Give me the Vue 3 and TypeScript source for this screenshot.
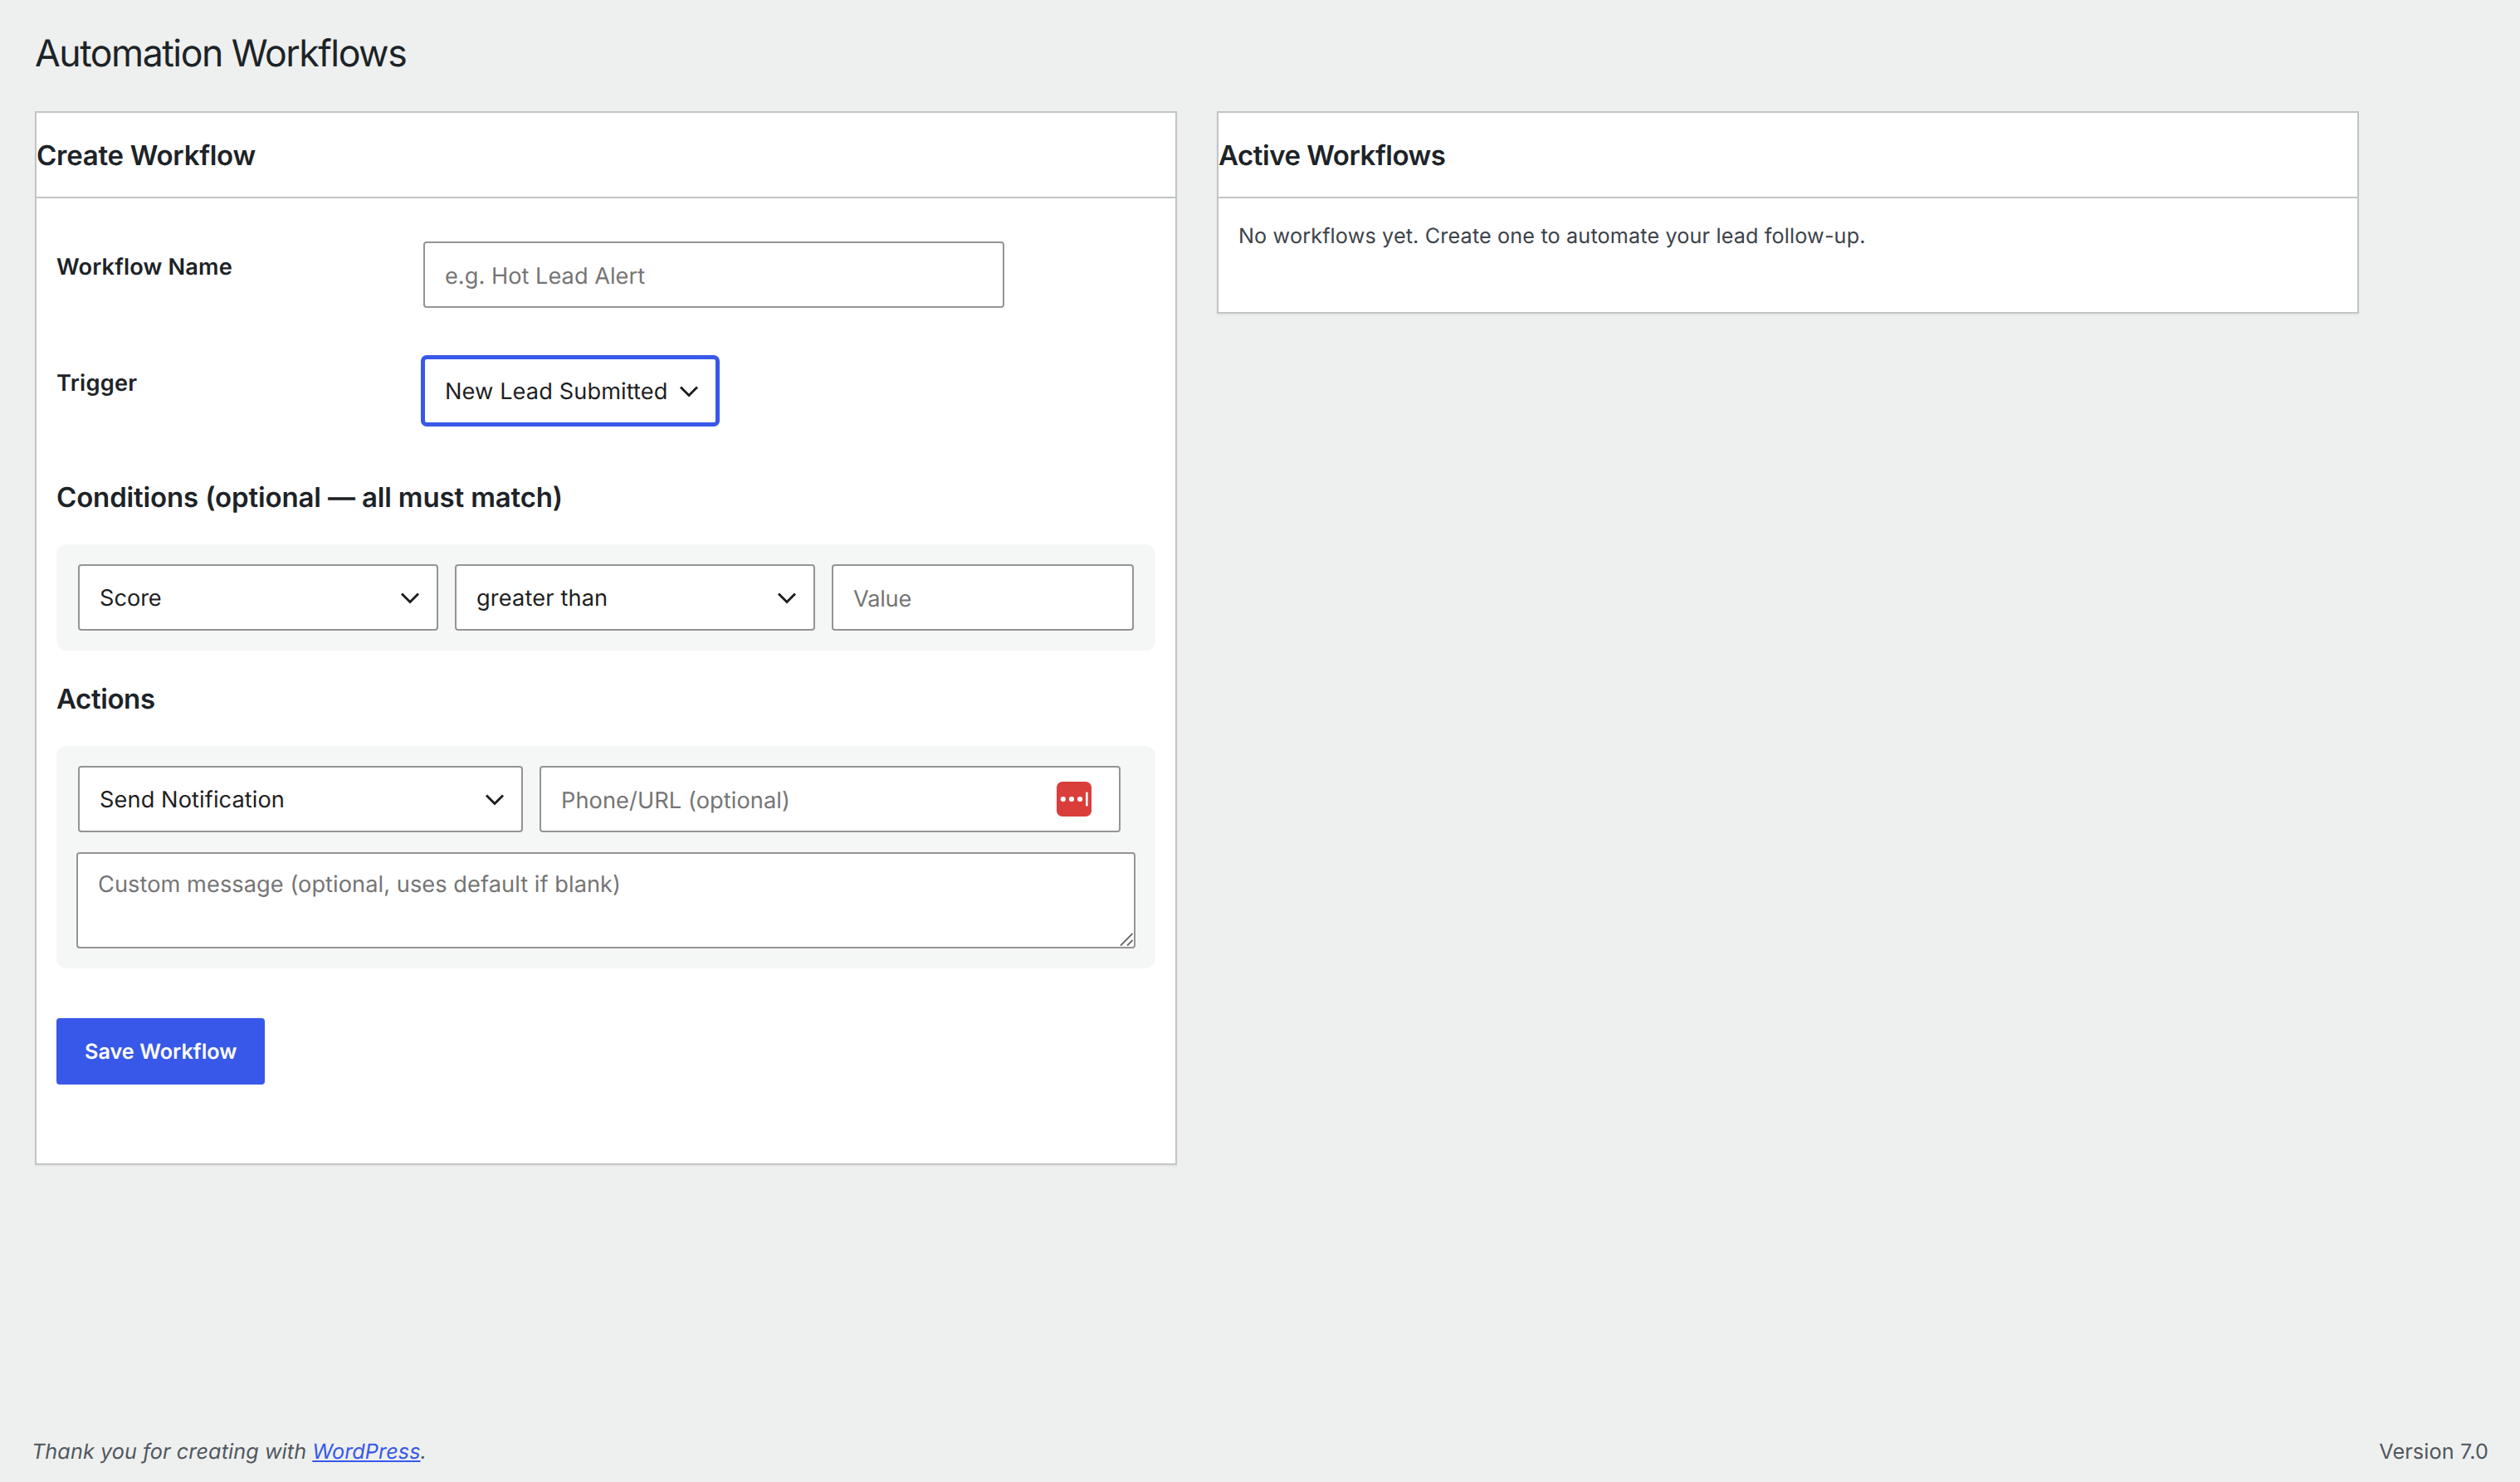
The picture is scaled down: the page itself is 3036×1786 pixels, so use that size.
<script setup lang="ts">
import { ref } from 'vue'

const workflowName = ref('')
const trigger = ref('new_lead')
const field = ref('score')
const operator = ref('gt')
const value = ref('')
const action = ref('notify')
const target = ref('')
const message = ref('')
</script>

<template>
  <div class="screen">
    <main class="wrap">
      <h1>Automation Workflows</h1>

      <div class="columns">
        <section class="card">
          <header class="card-head"><h2 class="t-create">Create Workflow</h2></header>
          <form class="card-body form" @submit.prevent>
            <div class="field">
              <label class="t-name" for="wf-name">Workflow Name</label>
              <input id="wf-name" v-model="workflowName" class="control wide t-eg" type="text" placeholder="e.g. Hot Lead Alert" />
            </div>
            <div class="field second">
              <label class="t-trigger" for="wf-trigger">Trigger</label>
              <div class="select trigger">
                <select id="wf-trigger" v-model="trigger" class="control focused t-lead">
                  <option value="new_lead">New Lead Submitted</option>
                </select>
                <svg class="chevron" viewBox="0 0 32 32"><path d="M6 10.5 16 20.5 26 10.5" /></svg>
              </div>
            </div>

            <h3 class="t-cond">Conditions (optional — all must match)</h3>
            <div class="group row">
              <div class="select cond">
                <select v-model="field" class="control t-score">
                  <option value="score">Score</option>
                </select>
                <svg class="chevron" viewBox="0 0 32 32"><path d="M6 10.5 16 20.5 26 10.5" /></svg>
              </div>
              <div class="select cond">
                <select v-model="operator" class="control t-gt">
                  <option value="gt">greater than</option>
                </select>
                <svg class="chevron" viewBox="0 0 32 32"><path d="M6 10.5 16 20.5 26 10.5" /></svg>
              </div>
              <input v-model="value" class="control value t-value" type="text" placeholder="Value" />
            </div>

            <h3 class="actions-title t-actions">Actions</h3>
            <div class="group">
              <div class="row">
                <div class="select action">
                  <select v-model="action" class="control t-send">
                    <option value="notify">Send Notification</option>
                  </select>
                  <svg class="chevron" viewBox="0 0 32 32"><path d="M6 10.5 16 20.5 26 10.5" /></svg>
                </div>
                <div class="target">
                  <input v-model="target" class="control wide t-phone" type="text" placeholder="Phone/URL (optional)" />
                  <svg class="vault" viewBox="0 0 42 42">
                    <rect width="42" height="42" rx="7" fill="#da3e3b" />
                    <circle cx="7.8" cy="21" r="3.1" />
                    <circle cx="18" cy="21" r="3.1" />
                    <circle cx="28.1" cy="21" r="3.1" />
                    <rect x="35.1" y="12.6" width="2.5" height="16.8" rx="1" />
                  </svg>
                </div>
              </div>
              <div class="message">
                <textarea v-model="message" class="control t-custom" placeholder="Custom message (optional, uses default if blank)"></textarea>
                <svg class="grip" viewBox="0 0 18 18"><path d="M2 16.5 16.5 2M10 16.5 16.5 10" /></svg>
              </div>
            </div>

            <button class="save" type="submit">Save Workflow</button>
          </form>
        </section>

        <section class="card">
          <header class="card-head"><h2 class="t-active">Active Workflows</h2></header>
          <div class="card-body empty">
            <p>No workflows yet. Create one to automate your lead follow-up.</p>
          </div>
        </section>
      </div>
    </main>

    <footer class="footer">
      <span class="thanks">Thank you for creating with <a href="#">WordPress</a>.</span>
      <span class="version">Version 7.0</span>
    </footer>
  </div>
</template>

<style>
body {
  background: #eef0ef;
}
</style>

<style scoped>
.screen,
.screen * {
  box-sizing: border-box;
}
.screen {
  display: flex;
  flex-direction: column;
  justify-content: space-between;
  width: 3036px;
  height: 1786px;
  overflow: hidden;
  background: #eef0ef;
  color: #1d2327;
  font-family: Inter, "Liberation Sans", sans-serif;
  text-rendering: geometricPrecision;
}
h1, h2, h3, p {
  margin: 0;
  white-space: nowrap;
}
.wrap {
  padding: 34px 0 0 42px;
}
h1 {
  margin-bottom: 40px;
  font-size: 44.6px;
  font-weight: 400;
  line-height: 60px;
  letter-spacing: -1.48px;
}
.columns {
  display: flex;
  align-items: flex-start;
  gap: 48px;
}
.card {
  width: 1376px;
  background: #fff;
  border: 2px solid #c3c4c7;
  box-shadow: 0 2px 2px rgba(0, 0, 0, 0.04);
}
.card-head {
  height: 103px;
  border-bottom: 2px solid #c3c4c7;
}
h2, h3 {
  font-size: 33px;
  font-weight: 620;
}
h2 {
  line-height: 102px;
}
.card-body {
  padding: 0 24px;
}
.form {
  padding-top: 52px;
  padding-bottom: 95px;
}
.field {
  display: flex;
}
.field.second {
  margin-top: 60px;
}
.field label {
  width: 442px;
  padding-top: 11px;
  font-size: 27.2px;
  font-weight: 620;
  line-height: 40px;
}
.control {
  display: block;
  width: 100%;
  height: 80px;
  margin: 0;
  padding: 0 24px;
  appearance: none;
  background: #fff;
  border: 2px solid #949494;
  border-radius: 4px;
  outline: none;
  color: #1e1e1e;
  font-family: inherit;
  font-size: 27.2px;
  line-height: 40px;
  text-rendering: geometricPrecision;
}
input.control,
select.control {
  padding-top: 2px;
}
.control::placeholder {
  color: #757575;
  opacity: 1;
}
.control.wide {
  width: 700px;
}
.control.value {
  width: 364px;
}
.control.focused {
  border-color: #3858e9;
  box-shadow: 0 0 0 3px #3858e9;
}
.select {
  position: relative;
}
.trigger {
  width: 354px;
}
.cond {
  width: 434px;
}
.action {
  width: 536px;
}
.chevron {
  position: absolute;
  top: 25px;
  right: 18px;
  width: 32px;
  height: 32px;
  fill: none;
  stroke: #1e1e1e;
  stroke-width: 3;
  pointer-events: none;
}
h3 {
  margin: 66px 0 35px;
  line-height: 44px;
}
h3.actions-title {
  margin-top: 36px;
}
.group {
  padding: 24px;
  background: #f5f7f6;
  border-radius: 12px;
}
.row {
  display: flex;
  gap: 20px;
}
.group .row {
  padding-left: 2px;
}
.group.row {
  padding-left: 26px;
}
.target {
  position: relative;
}
.vault {
  position: absolute;
  top: 19px;
  right: 35px;
  width: 42px;
  height: 42px;
  fill: #fff;
}
.message {
  position: relative;
  margin-top: 24px;
}
textarea.control {
  height: 116px;
  padding-top: 17px;
  resize: none;
  overflow: hidden;
}
.grip {
  position: absolute;
  right: 2px;
  bottom: 2px;
  width: 18px;
  height: 18px;
  fill: none;
  stroke: #6a6a6a;
  stroke-width: 1.8;
}
.save {
  display: block;
  width: 251px;
  height: 80px;
  margin-top: 60px;
  padding: 1px 0 0 34px;
  background: #3858e9;
  border: 0;
  border-radius: 4px;
  color: #fff;
  font-family: inherit;
  font-size: 25.2px;
  font-weight: 560;
  letter-spacing: 0.04px;
  text-align: left;
  text-rendering: geometricPrecision;
  white-space: nowrap;
}
.empty {
  height: 137px;
  padding-top: 26px;
}
.empty p {
  color: #3c434a;
  font-size: 25.2px;
  line-height: 40px;
  letter-spacing: 0.147px;
}
.footer {
  display: flex;
  justify-content: space-between;
  padding: 0 38px 16px 38px;
  color: #50575e;
  font-size: 25.2px;
  line-height: 40px;
}
.thanks {
  font-style: italic;
  letter-spacing: 0.09px;
}
.thanks a {
  color: #3858e9;
  text-decoration: underline;
  text-decoration-thickness: 2px;
  text-underline-offset: 2px;
  text-decoration-skip-ink: none;
}
.version {
  letter-spacing: 0.13px;
}
.t-create { letter-spacing: -0.27px; }
.t-active { letter-spacing: -0.47px; }
.t-name { letter-spacing: 0.15px; }
.t-trigger { letter-spacing: 0.27px; }
.t-eg { letter-spacing: 0.02px; }
.t-lead { letter-spacing: 0.1px; }
.t-cond { letter-spacing: -0.15px; }
.t-score { letter-spacing: -0.05px; }
.t-gt { letter-spacing: 0.15px; }
.t-value { letter-spacing: -0.21px; }
.t-actions { letter-spacing: -0.4px; }
.t-send { letter-spacing: 0.09px; }
.t-phone { letter-spacing: 0.08px; }
.t-custom { letter-spacing: 0.06px; }
</style>
